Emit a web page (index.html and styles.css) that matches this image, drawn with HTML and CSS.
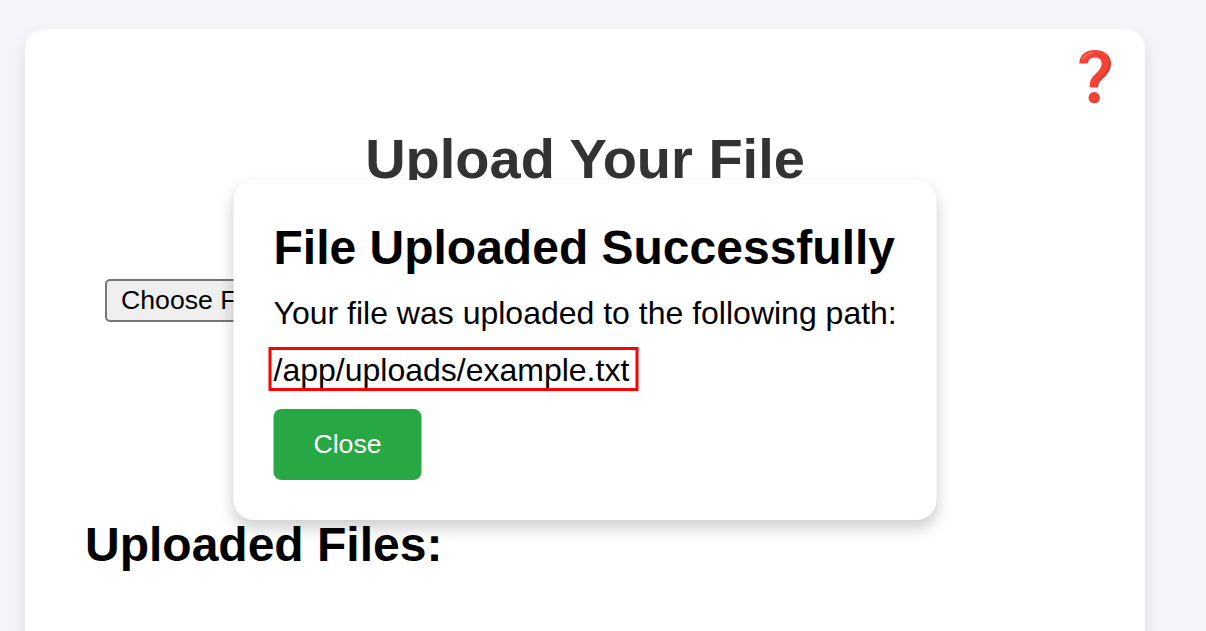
FILE: index.html
```html
<!DOCTYPE html>
<html lang="en">
<head>
<meta charset="utf-8">
<title>Upload Your File</title>
<link rel="stylesheet" href="styles.css">
</head>
<body>
<main class="card">
  <div class="help-row">
    <svg class="help-icon" viewBox="0 0 34 56" role="img" aria-label="Help">
      <defs>
        <clipPath id="hook"><path d="M1.4 14.6 C.6 14.6 .2 14 .3 13.2 C1.2 5.6 7 1 16 1 C25.4 1 31.8 6.4 31.8 14.6 C31.8 20.6 29 24.4 24.8 28.6 C20.8 32.4 19.3 33.6 19.2 37 C19.1 38 18.7 38.4 17.8 38.4 L12 38.4 C11.1 38.4 10.7 38 10.7 37 C10.7 31.4 12.6 28.4 17 24.4 C21 20.8 22.6 18.4 22.6 14.8 C22.6 10.8 20.2 8.6 16.4 8.6 C12.2 8.6 9.6 10.2 9 13.4 C8.8 14.2 8.3 14.6 7.5 14.6 Z"/></clipPath>
      </defs>
      <g clip-path="url(#hook)">
        <rect width="34" height="56" fill="#f44336"/>
        <path d="M26 3 C33 10 30 20 23.5 26.5 C19 31 17.5 34 17.3 39 H24 L36 28 V4 Z" fill="#df3a31"/>
        <path d="M4 9.5 C6.3 6 9.5 4.3 13 3.8" fill="none" stroke="#ff7a70" stroke-width="2" stroke-linecap="round" opacity=".65"/>
      </g>
      <circle cx="15.2" cy="48.7" r="5.6" fill="#e5372e"/>
      <circle cx="14.7" cy="48.4" r="4.9" fill="#f44336"/>
    </svg>
  </div>
  <h1 class="title">Upload Your File</h1>
  <div class="file-row">
    <button class="choose" type="button">Choose File</button>
  </div>
  <h2 class="files-heading">Uploaded Files:</h2>
</main>
<div class="modal" role="dialog" aria-labelledby="done">
  <h2 class="modal-title" id="done">File Uploaded Successfully</h2>
  <p class="modal-text">Your file was uploaded to the following path:</p>
  <p class="modal-text"><span class="path">/app/uploads/example.txt</span></p>
  <button class="close" type="button">Close</button>
</div>
</body>
</html>
```

FILE: styles.css
```css
* { box-sizing: border-box; }

body {
  margin: 0;
  height: 631px;
  padding: 29px 61px 0 25px;
  overflow: hidden;
  background: #f4f4f9;
  font-family: "Liberation Sans", Arial, sans-serif;
  color: #000;
}

.card {
  width: 1120px;
  height: 640px;
  padding: 20px 60px 0;
  background: #fff;
  border-radius: 20px 20px 0 0;
  box-shadow: 0 8px 16px rgba(0, 0, 0, 0.1);
}

.help-row {
  display: flex;
  justify-content: flex-end;
  height: 78px;
  margin-right: -28px;
}

.help-icon {
  width: 34px;
  height: 56px;
}

.title {
  margin: 0;
  font-size: 56px;
  line-height: 64px;
  text-align: center;
  color: #333;
}

.file-row {
  display: flex;
  padding: 88px 20px 0;
}

.choose {
  height: 43px;
  padding: 0 14px 2px;
  border: 2px solid #767676;
  border-radius: 5px;
  background: #efefef;
  font: 26.667px/30px "Liberation Sans", Arial, sans-serif;
  color: #000;
}

.files-heading {
  margin: 195px 0 0;
  font-size: 48px;
  line-height: 55px;
}

.modal {
  position: absolute;
  top: 180px;
  left: 585px;
  width: 703px;
  height: 340px;
  padding: 40px;
  background: #fff;
  border-radius: 20px;
  box-shadow: 0 8px 16px rgba(0, 0, 0, 0.2);
  transform: translateX(-50%);
}

.modal-title {
  margin: 0 0 20px;
  font-size: 48px;
  line-height: 55px;
  white-space: nowrap;
}

.modal-text {
  margin: 0 0 20px;
  font-size: 32px;
  line-height: 37px;
  white-space: nowrap;
}

.path {
  display: inline-block;
  width: 370px;
  height: 44px;
  margin: -5px 0 -2px -5px;
  padding: 2px 0 0 2px;
  border: 3px solid #f00;
  vertical-align: top;
}

.close {
  display: block;
  width: 148px;
  height: 71px;
  padding: 0 0 2px;
  border: 0;
  border-radius: 8px;
  background: #28a745;
  font: 26.667px/30px "Liberation Sans", Arial, sans-serif;
  color: #fff;
}
```
